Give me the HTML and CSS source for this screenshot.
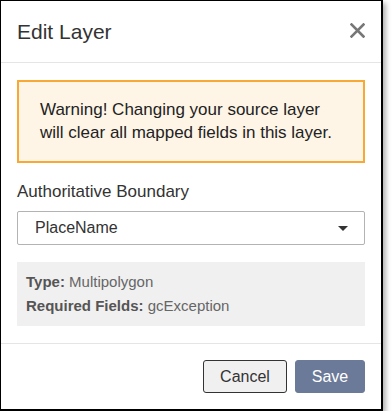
FILE: index.html
```html
<!DOCTYPE html>
<html lang="en">
<head>
    <meta charset="UTF-8">
    <meta name="viewport" content="width=device-width, initial-scale=1.0">
    <title>Edit Layer</title>
    <link rel="stylesheet" href="styles.css">
</head>
<body>
    <div class="dialog">
        <div class="dialog-header">
            <h2 class="dialog-title">Edit Layer</h2>
            <button class="close" aria-label="Close">
                <svg width="15" height="15" viewBox="0 0 15 15">
                    <path d="M1.5,1.5 L13.5,13.5 M13.5,1.5 L1.5,13.5" stroke="#777" stroke-width="2.6" stroke-linecap="square"/>
                </svg>
            </button>
        </div>
        <div class="dialog-body">
            <div class="warning">
                Warning! Changing your source layer will clear all mapped fields in this layer.
            </div>
            <label class="field-label">Authoritative Boundary</label>
            <div class="select">
                <span>PlaceName</span>
                <span class="caret"></span>
            </div>
            <div class="info">
                <div><b>Type:</b> Multipolygon</div>
                <div><b>Required Fields:</b> gcException</div>
            </div>
        </div>
        <div class="dialog-footer">
            <button class="btn btn-cancel">Cancel</button>
            <button class="btn btn-save">Save</button>
        </div>
    </div>
</body>
</html>
```

FILE: styles.css
```css
body {
    margin: 0;
    padding: 0;
    background-color: #fff;
    font-family: "Liberation Sans", Arial, sans-serif;
    color: #333;
}
.dialog {
    width: 380px;
    height: 408px;
    border: 1px solid #000;
    border-right-width: 2px;
    border-bottom-width: 2px;
    box-shadow: 3px 3px 5px rgba(0, 0, 0, 0.3);
    background-color: #fff;
    display: flex;
    flex-direction: column;
}
.dialog-header {
    height: 61px;
    border-bottom: 1px solid #e5e5e5;
    display: flex;
    align-items: center;
    justify-content: space-between;
    padding: 0 16px;
}
.dialog-title {
    margin: 0;
    font-size: 21px;
    font-weight: normal;
    color: #333;
}
.close {
    border: none;
    background: none;
    padding: 0;
    width: 15px;
    height: 15px;
    margin-top: -2px;
    cursor: pointer;
}
.close svg {
    display: block;
}
.dialog-body {
    padding: 17px 16px 16px;
    flex-grow: 1;
    border-bottom: 1px solid #e5e5e5;
}
.warning {
    background-color: #fef5e7;
    border: 2px solid #f8a935;
    padding: 16px 24px 16px 21px;
    font-size: 17px;
    line-height: 23px;
    color: #222;
    height: 47px;
}
.field-label {
    display: block;
    margin-top: 17px;
    font-size: 17px;
    line-height: 23px;
}
.select {
    margin-top: 8px;
    height: 32px;
    border: 1px solid #b3b3b3;
    border-radius: 2px;
    padding: 0 16px 0 17px;
    display: flex;
    align-items: center;
    justify-content: space-between;
    font-size: 16px;
    color: #333;
}
.caret {
    width: 0;
    height: 0;
    border-left: 5px solid transparent;
    border-right: 5px solid transparent;
    border-top: 5px solid #333;
}
.info {
    margin-top: 17px;
    background-color: #f0f0f0;
    padding: 8px 9px;
    font-size: 15px;
    line-height: 24px;
    color: #666;
}
.info b {
    color: #555;
}
.dialog-footer {
    padding: 16px;
    display: flex;
    justify-content: flex-end;
    gap: 8px;
}
.btn {
    height: 33px;
    font-family: "Liberation Sans", Arial, sans-serif;
    font-size: 16px;
    border-radius: 3px;
    cursor: pointer;
}
.btn-cancel {
    width: 84px;
    background-color: #f0f0f0;
    border: 1px solid #333;
    color: #333;
}
.btn-save {
    width: 70px;
    background-color: #6b7a98;
    border: 1px solid #6b7a98;
    color: #fff;
}
```
